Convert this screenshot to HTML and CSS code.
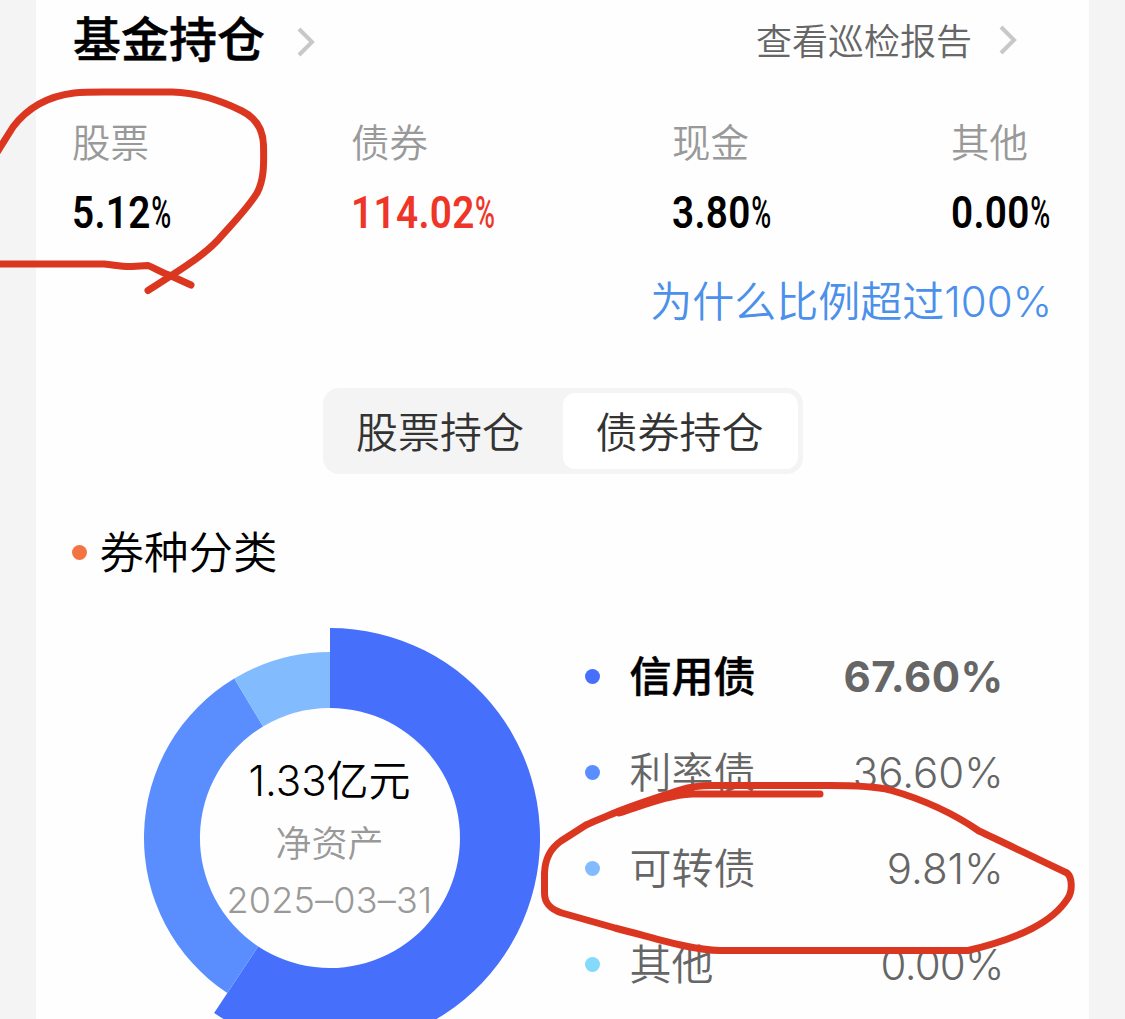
FILE: index.html
```html
<!DOCTYPE html>
<html lang="zh-CN">
<head>
<meta charset="utf-8">
<title>基金持仓</title>
<link rel="stylesheet" href="styles.css">
</head>
<body>
<main class="card">
  <header class="header">
    <h1 class="title">基金持仓</h1>
    <svg class="chevron" width="20" height="32" viewBox="0 0 20 32"><path d="M3 3 L16 16 L3 29"/></svg>
    <a class="report">查看巡检报告</a>
    <svg class="chevron chevron-end" width="20" height="32" viewBox="0 0 20 32"><path d="M3 3 L16 16 L3 29"/></svg>
  </header>

  <section class="stats">
    <div class="stat"><div class="label">股票</div><div class="value"><span class="num">5.12</span><span class="pct">%</span></div></div>
    <div class="stat"><div class="label">债券</div><div class="value red"><span class="num">114.02</span><span class="pct">%</span></div></div>
    <div class="stat"><div class="label">现金</div><div class="value"><span class="num">3.80</span><span class="pct">%</span></div></div>
    <div class="stat"><div class="label">其他</div><div class="value"><span class="num">0.00</span><span class="pct">%</span></div></div>
  </section>
  <a class="why">为什么比例超过<span class="why-num">100%</span></a>

  <nav class="tabs">
    <div class="tab">股票持仓</div>
    <div class="tab active">债券持仓</div>
  </nav>

  <h2 class="section-title"><i class="dot orange"></i><span>券种分类</span></h2>

  <section class="breakdown">
    <div class="chart">
      <svg class="donut" width="420" height="420" viewBox="-210 -210 420 420">
        <path fill="#466ffb" d="M0 -210 A210 210 0 1 1 -115.9 175.1 L-71.8 108.4 A130 130 0 1 0 0 -130 Z"/>
        <path fill="#5a8efe" d="M-102.7 155.1 A186 186 0 0 1 -95.7 -159.5 L-66.9 -111.5 A130 130 0 0 0 -71.8 108.4 Z"/>
        <path fill="#83bcfe" d="M-95.7 -159.5 A186 186 0 0 1 0 -186 L0 -130 A130 130 0 0 0 -66.9 -111.5 Z"/>
      </svg>
      <div class="summary">
        <div class="amount">1.33亿元</div>
        <div class="caption">净资产</div>
        <div class="date">2025–03–31</div>
      </div>
    </div>
    <ul class="legend">
      <li class="row strong"><i class="dot c1"></i><span class="name">信用债</span><span class="share">67.60%</span></li>
      <li class="row"><i class="dot c2"></i><span class="name">利率债</span><span class="share">36.60%</span></li>
      <li class="row"><i class="dot c3"></i><span class="name">可转债</span><span class="share">9.81%</span></li>
      <li class="row"><i class="dot c4"></i><span class="name">其他</span><span class="share zero">0.00%</span></li>
    </ul>
  </section>
</main>

<svg class="marks" width="1125" height="1019" viewBox="0 0 1125 1019">
  <path d="M-4 154 L13 127 C28 107 50 96 74 93 C84 92 95 92 104 92 H172 C195 92.500 218 99 242 111 C256 118 263 130 263.500 145 C264 165 264 180 257 193 C248 208 232 224 218 240 C202 257 180 270 148 290.500"/>
  <path d="M-4 264 H104 C115 265 122 267 132 266.500 L148 265.500 C155 268 160 272 169 275 L191 285"/>
  <path d="M820 794 H692 C670 795 650 803 619 813"/>
  <path d="M619 811 C645 801 662 796 680 790 C690 787 702 785.500 712 785.500 H830 C858 785.500 878 787 890 790 C925 800 953 813 979 831 C1005 843 1035 858 1067 873 C1073 878 1072 892 1068 898 C1053 922 1020 938 968 950.500 H720 C690 950 655 938 615 928 L562 913 C550 909 544.500 903 544.500 893 V873 C545 858 551 848 561 841 L586 825 C596 820 608 816 619 811"/>
</svg>
</body>
</html>
```
FILE: styles.css
```css
* { box-sizing: border-box; }

body {
  margin: 0;
  height: 1019px;
  overflow: hidden;
  position: relative;
  background: #f4f4f4;
  font-family: "Noto Sans CJK SC", sans-serif;
  font-weight: 350;
  color: #000;
}

.card {
  width: 1053px;
  height: 1019px;
  margin-left: 36px;
  overflow: hidden;
  background: #fefefe;
}

.header {
  display: flex;
  align-items: center;
  height: 82px;
  padding: 0 71px 0 37px;
}

.title {
  margin: 0;
  padding-bottom: 10px;
  font-size: 48px;
  line-height: 72px;
  font-weight: 500;
  -webkit-text-stroke: .5px #000;
}

.chevron {
  margin: 2px 0 0 31px;
  fill: none;
  stroke: #c8c8c8;
  stroke-width: 4;
}

.report {
  margin-left: auto;
  padding-bottom: 4px;
  font-size: 36px;
  color: #666;
}

.chevron-end { margin: -2px 0 0 26px; }

.stats {
  display: grid;
  grid-template-columns: 279px 321px 279px auto;
  padding: 28px 0 0 36px;
}

.label {
  height: 60px;
  margin-bottom: 13px;
  font-size: 38.500px;
  line-height: 60px;
  color: #999;
}

.value {
  display: flex;
  height: 60px;
  font: 600 44px/60px Roboto, sans-serif;
  transform: scaleX(.88);
  transform-origin: left;
}

.num { letter-spacing: .4px; }

.pct {
  width: 20px;
  font-weight: 500;
  transform: scaleX(.7);
  transform-origin: left;
}

.red { color: #ee3528; }

.why {
  display: block;
  height: 60px;
  margin: 26px 37px 0 0;
  text-align: right;
  font-size: 42px;
  line-height: 60px;
  color: #4b90ea;
}

.why-num { font-family: Inter, sans-serif; }

.tabs {
  display: grid;
  grid-template-columns: 1fr 1fr;
  width: 480px;
  height: 86px;
  margin: 59px 0 0 287px;
  padding: 5px;
  border-radius: 16px;
  background: #f4f4f4;
}

.tab {
  padding-right: 11px;
  border-radius: 12px;
  font-size: 42px;
  line-height: 73px;
  text-align: center;
  color: #333;
}

.active {
  padding-right: 2px;
  background: #fff;
}

.section-title {
  display: flex;
  align-items: center;
  gap: 12.500px;
  height: 60px;
  margin: 48px 0 0 36px;
  font-size: 44.500px;
  line-height: 56px;
  font-weight: 350;
}

.section-title span { padding-bottom: 4px; }

.dot {
  width: 15px;
  height: 15px;
  border-radius: 50%;
}

.orange { background: #f47343; }
.c1 { background: #466ffb; }
.c2 { background: #5a8efe; }
.c3 { background: #83bcfe; }
.c4 { background: #83dafb; }

.breakdown {
  display: flex;
  gap: 44.500px;
  margin: 46px 0 0 84px;
}

.chart { display: grid; }

.donut, .summary { grid-area: 1 / 1; }

.summary {
  padding: 123px 1px 0 0;
  text-align: center;
  font-family: Inter, "Noto Sans CJK SC", sans-serif;
}

.amount {
  height: 60px;
  font-size: 42px;
  line-height: 60px;
}

.caption {
  height: 54px;
  margin-top: 6px;
  font-size: 36px;
  line-height: 54px;
  color: #999;
}

.date {
  height: 54px;
  margin-top: 2px;
  font-size: 36px;
  line-height: 54px;
  letter-spacing: .2px;
  color: #999;
}

.legend {
  width: 419px;
  margin: 0;
  padding: 0;
  list-style: none;
}

.row {
  display: flex;
  align-items: center;
  height: 96px;
  font-size: 42px;
  line-height: 92px;
  color: #666;
}

.name {
  margin-left: 30px;
  padding-bottom: 4px;
}

.share {
  margin-left: auto;
  padding-top: 2px;
  font-family: Inter, sans-serif;
}

.zero { letter-spacing: -.8px; }

.strong .name {
  font-weight: 500;
  color: #000;
  -webkit-text-stroke: .5px #000;
}

.strong .share {
  font-weight: 650;
  letter-spacing: .4px;
}

.marks {
  position: absolute;
  top: 0;
  left: 0;
  fill: none;
  stroke: #db3720;
  stroke-width: 7;
  stroke-linecap: round;
  stroke-linejoin: round;
}
```
